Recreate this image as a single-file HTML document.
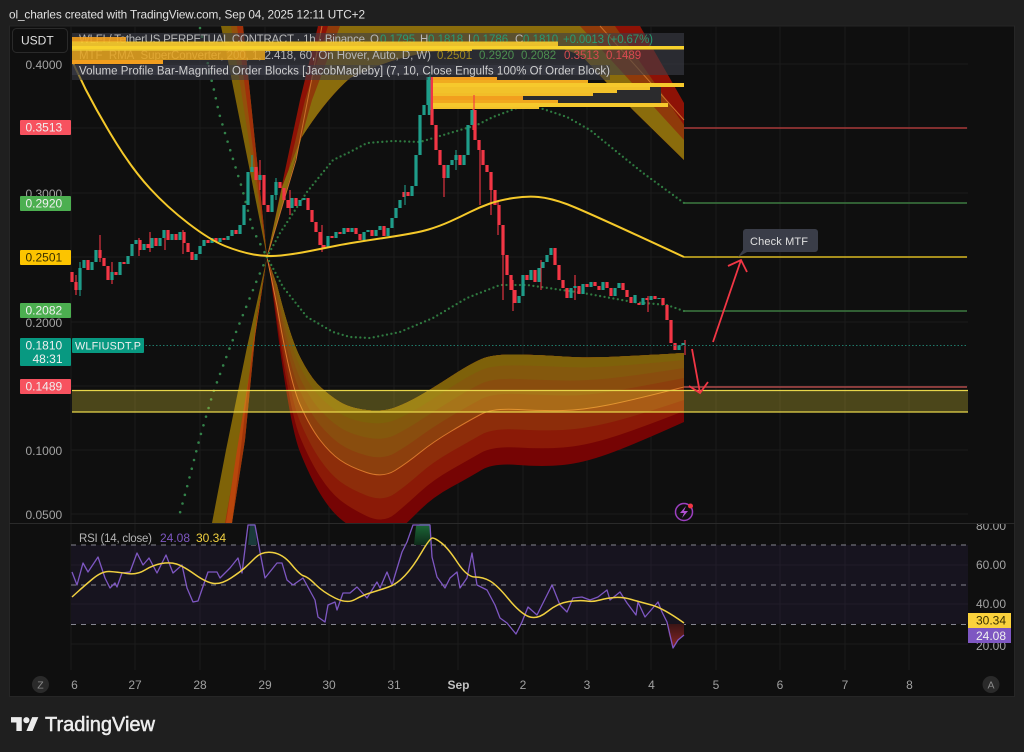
<!DOCTYPE html>
<html><head><meta charset="utf-8"><style>
html,body{margin:0;padding:0;background:#1f1f1f;width:1024px;height:752px;overflow:hidden}
svg{display:block;filter:blur(.35px)}
text{font-family:"Liberation Sans",sans-serif}
</style></head><body>
<svg width="1024" height="752" viewBox="0 0 1024 752" xmlns="http://www.w3.org/2000/svg">
<rect width="1024" height="752" fill="#1f1f1f"/>
<text x="9" y="18.500" font-size="11.800" fill="#e0e0e0" textLength="356">ol_charles created with TradingView.com, Sep 04, 2025 12:11 UTC+2</text>
<rect x="9" y="26" width="1006" height="670" fill="#0f0f0f"/>
<rect x="9.500" y="26" width="1005" height="670.500" fill="none" stroke="#262626"/>
<!-- grid -->
<g stroke="#1b1b1b" fill="none">
<path d="M71 26V696M135 26V670M200 26V670M265 26V670M329 26V670M394 26V670M458 26V670M523 26V670M587 26V670M651 26V670M716 26V670M780 26V670M845 26V670M909 26V670"/>
<path d="M71 64H968M71 128H968M71 193H968M71 257H968M71 322H968M71 386H968M71 450H968M71 514H968M71 565H968M71 604H968M71 644H968"/>
</g>
<!-- upper right fan -->
<path d="M267 257L283 180L300 100L318 26H640L684 103V160L633 110L607 83L583 57Q557 43 520 45Q470 48 430 52Q390 58 350 78Q325 100 300 140L282 187Z" fill="#8e1206"/>
<path d="M267 257L286 180L305 100L328 26H615L684 125V160L633 110L607 83L583 57Q557 43 520 45Q470 48 430 52Q390 58 350 78Q325 100 300 140L282 187Z" fill="#8f3a0a"/>
<path d="M267 257L291 175L312 100L340 26H580L684 140V160L633 110L607 83L583 57Q557 43 520 45Q470 48 430 52Q390 58 350 78Q325 100 300 140L282 187Z" fill="#8a6c0c"/>
<path d="M267 257L296 160L322 26" stroke="#c9702a" fill="none" stroke-width="1"/>
<path d="M600 26L684 120" stroke="#c9702a" fill="none" stroke-width="1"/>
<!-- upper left fan -->
<path d="M267 257L221 26H243Z" fill="#7f6308"/>
<path d="M267 257L236 26H243Z" fill="#a0300a"/>
<path d="M267 257L231 26H237Z" fill="#93500b"/>
<!-- lower left fan -->
<path d="M267 257L247 347L226 450L212 523H232L245 440L257 317Z" fill="#7f6308"/>
<path d="M267 257L250 370L238 450L225 523H232L245 440L257 317Z" fill="#a0350a"/>
<path d="M267 257L252 350L243 430L232 523H226L237 450L250 370Z" fill="#b8460c"/>
<!-- lower right lobe -->
<clipPath id="cb"><path d="M267 257L277 285Q290 337 300 357Q310 377 320 386.500Q330 396 340 402Q350 408 366.500 410Q383 412 395 407.500Q407 403 420 395.500Q433 388 451.500 376Q470 364 481.500 359Q493 354 518 354.500Q543 355 563 356.500Q583 358 608 357Q633 356 684 353V523H267Z"/></clipPath>
<g clip-path="url(#cb)">
<path d="M267 250L277 327Q290 427 300 452Q310 477 320 493.500Q330 510 340 518.500Q350 527 366.500 536Q383 545 395 534Q407 523 420 510Q433 497 451.500 487Q470 477 481.500 470Q493 463 518 465Q543 467 563 465Q583 463 608 454Q633 445 684 422V340Z" fill="#760404"/>
<path d="M267 250L277 320Q290 413 300 437Q310 461 320 476.500Q330 492 340 500Q350 508 366.500 516Q383 524 395 514Q407 504 420 492Q433 480 451.500 469.500Q470 459 481.500 452.500Q493 446 518 447.500Q543 449 563 447.500Q583 446 608 438.500Q633 431 684 411V340Z" fill="#8b1a07"/>
<path d="M267 250L277 314Q290 398 300 421.500Q310 445 320 459.500Q330 474 340 481.500Q350 489 366.500 495.500Q383 502 395 493.500Q407 485 420 473.500Q433 462 451.500 451.500Q470 441 481.500 434.500Q493 428 518 429.500Q543 431 563 430Q583 429 608 423Q633 417 684 400V340Z" fill="#8d2d0a"/>
<path d="M267 250L277 306Q290 382 300 404.500Q310 427 320 440Q330 453 340 460Q350 467 366.500 472.500Q383 478 395 470.500Q407 463 420 452.500Q433 442 451.500 431Q470 420 481.500 414Q493 408 518 409.500Q543 411 563 410.500Q583 410 608 405Q633 400 684 387V340Z" fill="#8c3f0d"/>
<path d="M267 250L277 300Q290 369 300 391Q310 413 320 425Q330 437 340 444Q350 451 366.500 455.500Q383 460 395 453Q407 446 420 436.500Q433 427 451.500 416Q470 405 481.500 399Q493 393 518 394Q543 395 563 395.500Q583 396 608 392Q633 388 684 378V340Z" fill="#894d0e"/>
<path d="M267 250L277 294Q290 357 300 378Q310 399 320 410Q330 421 340 427.500Q350 434 366.500 437.500Q383 441 395 435Q407 429 420 420.500Q433 412 451.500 400.500Q470 389 481.500 383.500Q493 378 518 379Q543 380 563 380.500Q583 381 608 378.500Q633 376 684 368V340Z" fill="#84580d"/>
<path d="M267 250L277 289Q290 346 300 366.500Q310 387 320 397Q330 407 340 413.500Q350 420 366.500 422.500Q383 425 395 420Q407 415 420 407Q433 399 451.500 387Q470 375 481.500 370Q493 365 518 365.500Q543 366 563 367Q583 368 608 366.500Q633 365 684 360V340Z" fill="#7e610a"/>
<path d="M267 257L277 306Q290 382 300 404.500Q310 427 320 440Q330 453 340 460Q350 467 366.500 472.500Q383 478 395 470.500Q407 463 420 452.500Q433 442 451.500 431Q470 420 481.500 414Q493 408 518 409.500Q543 411 563 410.500Q583 410 608 405Q633 400 684 387" stroke="#d9782c" stroke-width="1" fill="none"/>
</g>
<!-- dots -->
<g fill="none" stroke-linecap="round" stroke-width="2.300" stroke-dasharray="0 4.500">
<path d="M267 257L280 233L307 192L333 160L350 152L367 143L393 141L420 142L450 133L477 125L493 117L517 108L540 108L567 117L590 130L617 152L643 173L684 203" stroke="#2f7a40"/>
<path d="M267 257L283 287L307 317L333 332L350 337L370 338L400 332L433 318L467 298L500 285L527 285L583 293L633 302L667 305L684 311" stroke="#2f7a40"/>
<path d="M200 28L211 78L214 90L219 113L228 143L237 172L242 188L253 230L267 257" stroke="#33824a" stroke-width="2.600" stroke-dasharray="0 9"/>
<path d="M267 257L257 280L230 347L213 393L200 437L187 487L178 520" stroke="#33824a" stroke-width="2.600" stroke-dasharray="0 9"/>
</g>
<!-- candles -->
<path stroke="#f23645" stroke-width="3.200" fill="none" d="M72 272V282M76 282V290M88 260V270M100 250V258M104 258V266M108 266V280M116 272V275M124 262V264M140 240V250M148 244V248M156 238V246M168 230V240M176 234V240M184 232V243M188 243V252M192 252V260M208 240V243M216 238V242M224 238V240M236 230V234M256 167V180M264 175V205M268 205V212M280 182V188M284 188V200M288 200V208M296 198V206M308 198V210M312 210V222M316 222V232M320 232V245M324 245V248M332 236V238M340 232V234M348 228V232M356 228V234M360 234V240M372 230V236M384 226V236M404 192V197M408 192V196M432 77V125M436 125V150M440 150V165M444 165V178M460 155V165M475 110V140M479 140V150M483 150V165M487 165V172M491 172V190M495 190V205M499 205V225M503 225V255M507 255V275M511 275V290M515 290V303M527 275V280M535 270V282M555 248V265M559 265V280M563 280V288M567 288V298M579 286V294M587 284V287M595 282V286M599 286V290M607 282V288M611 288V296M623 283V290M627 290V297M631 297V303M639 303V305M647 298V300M655 296V299M663 298V305M667 305V320M671 320V343M675 343V350"/>
<path stroke="#f23645" stroke-width="1.100" fill="none" d="M76 275V295M100 235V262M112 262V284M139 238V256M150 232V252M165 230V250M183 230V254M260 160V190M290 190V215M322 225V252M444 165V197M473 95V130M480 140V205M491 172V215M498 200V235M503 225V300M513 280V311M541 260V290M575 275V300M648 296V312M685 340V355"/>
<path stroke="#1f9d8a" stroke-width="3.200" fill="none" d="M80 268V290M84 260V268M92 262V270M96 250V262M112 272V280M120 262V275M128 256V264M132 244V256M136 240V244M144 244V250M152 238V248M160 238V246M164 230V238M172 234V240M180 232V240M196 254V260M200 246V254M204 240V246M212 238V243M220 238V242M228 236V240M232 230V236M240 225V234M244 205V225M248 172V205M252 167V172M260 175V180M272 195V212M276 182V195M292 198V208M300 200V206M304 198V200M328 236V248M336 232V238M344 228V234M352 228V232M364 232V240M368 230V232M376 230V236M380 226V230M388 228V236M392 218V228M396 208V218M400 200V208M412 186V196M416 155V186M420 115V155M424 105V115M428 77V105M448 165V178M452 160V165M456 155V160M464 155V165M468 125V155M472 110V125M519 296V303M523 275V296M531 270V280M539 268V282M543 262V268M547 255V262M551 248V255M571 288V298M575 286V288M583 284V294M591 282V287M603 282V290M615 288V296M619 283V288M635 295V303M643 298V305M651 296V300M659 298V299M679 345V350M683 343V345"/>
<path stroke="#1f9d8a" stroke-width="1.100" fill="none" d="M252 155V172M80 262V296M276 178V200M456 150V170M430 72V110M405 185V205"/>
<!-- main curves -->
<path d="M73 63L86 90Q100 117 116.500 143.500Q133 170 150 188.500Q167 207 188.500 223.500Q210 240 225 246Q240 252 253.500 254.500Q267 257 281 255.500Q295 254 310 251Q325 248 337.500 245.500Q350 243 383.500 238Q417 233 428.500 229.500Q440 226 450 221.500Q460 217 470 212Q480 207 490 203.500Q500 200 513.500 198Q527 196 538.500 197Q550 198 566.500 204Q583 210 684 257" fill="none" stroke="#f5c92a" stroke-width="2"/>
<!-- level lines -->
<path d="M684 128H967" stroke="#a83a3a" stroke-width="1.500"/>
<path d="M684 203H967" stroke="#3d7a40" stroke-width="1.500"/>
<path d="M684 257H967" stroke="#d8b822" stroke-width="1.500"/>
<path d="M684 311H967" stroke="#3d7a40" stroke-width="1.500"/>
<path d="M72 345.500H967" stroke="#1f7a6a" stroke-dasharray="1.500 2"/>
<path d="M684 387H967" stroke="#b04a4a" stroke-width="1.500"/>
<!-- zone -->
<rect x="72" y="390" width="896" height="22" fill="#ffeb3b" fill-opacity="0.25"/>
<path d="M72 390.500H968M72 412H968" stroke="#e8d64a" stroke-width="1.300"/>
<!-- header panel -->
<rect x="72" y="33" width="612" height="42" fill="#3c3e48" fill-opacity="0.6"/>
<rect x="72" y="65" width="538" height="15" fill="#3c3e48" fill-opacity="0.55"/>
<rect x="431" y="87" width="230" height="20" fill="#2b2b2d"/>
<g font-size="11.500">
<text x="79" y="43" fill="#b8b8b8" textLength="286">WLFI / TetherUS PERPETUAL CONTRACT · 1h · Binance</text>
<text x="370" y="43" fill="#b8b8b8">O</text><text x="380" y="43" fill="#2a9a70">0.1795</text>
<text x="420" y="43" fill="#b8b8b8">H</text><text x="428" y="43" fill="#2a9a70">0.1818</text>
<text x="468" y="43" fill="#b8b8b8">L</text><text x="473" y="43" fill="#2a9a70">0.1786</text>
<text x="515" y="43" fill="#b8b8b8">C</text><text x="523" y="43" fill="#2a9a70">0.1810</text>
<text x="563" y="43" fill="#2a9a70" textLength="90">+0.0013 (+0.67%)</text>
<text x="79" y="59" fill="#b8b8b8" textLength="352">MTF_RMA_SuperConverter, 200, 1, 2.418, 60, On Hover, Auto, D, W)</text>
<text x="437" y="59" fill="#a08a20">0.2501</text>
<text x="479" y="59" fill="#4c8f50">0.2920</text>
<text x="521" y="59" fill="#4c8f50">0.2082</text>
<text x="564" y="59" fill="#d84a50">0.3513</text>
<text x="606" y="59" fill="#d84a50">0.1489</text>
<text x="79" y="74.500" fill="#cfcfcf" textLength="531">Volume Profile Bar-Magnified Order Blocks [JacobMagleby] (7, 10, Close Engulfs 100% Of Order Block)</text>
</g>
<!-- top volume profile -->
<g>
<rect x="72" y="37" width="54" height="5" fill="#f29e1e" fill-opacity="0.9"/>
<rect x="72" y="41.500" width="486" height="4.500" fill="#f6c92c" fill-opacity="0.93"/>
<rect x="72" y="46" width="612" height="3.500" fill="#f8d22c"/>
<rect x="72" y="49.500" width="400" height="1.500" fill="#f6c92c" fill-opacity="0.9"/>
<rect x="72" y="51" width="193" height="9" fill="#e8a51c" fill-opacity="0.85"/>
<rect x="72" y="60" width="91" height="4" fill="#f29e1e"/>
</g>
<!-- lower volume profile -->
<g>
<rect x="431" y="77" width="66" height="3" fill="#f29e1e"/>
<rect x="431" y="80" width="157" height="3" fill="#f0ab1f"/>
<rect x="431" y="83" width="253" height="4" fill="#f6c92c"/>
<rect x="431" y="87" width="219" height="3" fill="#f2c22a"/>
<rect x="431" y="90" width="186" height="3" fill="#f2c22a"/>
<rect x="431" y="93" width="162" height="3" fill="#f2bd28"/>
<rect x="431" y="96" width="92" height="4" fill="#f29e1e"/>
<rect x="431" y="100" width="127" height="3" fill="#f0a81e"/>
<rect x="431" y="103" width="237" height="4" fill="#f6c92c"/>
<rect x="431" y="107" width="108" height="2" fill="#f2c22a"/>
</g>
<path d="M429 77V115" stroke="#1f9d8a" stroke-width="2.500"/>
<path d="M432 77V125" stroke="#f23645" stroke-width="2"/>
<path d="M474 95V130" stroke="#f23645" stroke-width="1.100"/>
<!-- arrows -->
<g fill="none" stroke="#f23645" stroke-width="1.800">
<path d="M713 342L741 260M728 266L741 260L747 272"/>
<path d="M692 349L700 393M689 386L700 393L708 382"/>
</g>
<!-- callout -->
<path d="M746 229H815a3 3 0 0 1 3 3V249a3 3 0 0 1-3 3H747L738 257L743 250V232a3 3 0 0 1 3-3Z" fill="#3a3d48"/>
<text x="750" y="245" font-size="11" fill="#e0e0e0" textLength="58">Check MTF</text>
<!-- USDT box -->
<rect x="12.500" y="28.500" width="55" height="24" rx="4" fill="#0f0f0f" stroke="#2a2a2a"/>
<text x="21" y="44.500" font-size="12" fill="#e0e0e0">USDT</text>
<!-- axis labels -->
<g font-size="12" fill="#a3a3a3">
<text x="25.500" y="69">0.4000</text>
<text x="25.500" y="198">0.3000</text>
<text x="25.500" y="327">0.2000</text>
<text x="25.500" y="455">0.1000</text>
<text x="25.500" y="519">0.0500</text>
</g>
<rect x="20" y="120" width="51" height="15" rx="1" fill="#f7525f"/>
<rect x="20" y="196" width="51" height="15" rx="1" fill="#4caf50"/>
<rect x="20" y="250" width="51" height="15" rx="1" fill="#fcc400"/>
<rect x="20" y="303" width="51" height="15" rx="1" fill="#4caf50"/>
<rect x="20" y="338" width="51" height="28" rx="1" fill="#089981"/>
<rect x="20" y="379" width="51" height="15" rx="1" fill="#f7525f"/>
<rect x="72" y="338" width="72" height="15" rx="1" fill="#089981"/>
<g font-size="12" fill="#f0f0f0">
<text x="25.500" y="131.500">0.3513</text>
<text x="25.500" y="207.500">0.2920</text>
<text x="25.500" y="261.500" fill="#3a3000">0.2501</text>
<text x="25.500" y="314.500">0.2082</text>
<text x="25.500" y="349.500">0.1810</text>
<text x="32.500" y="363">48:31</text>
<text x="25.500" y="390.500">0.1489</text>
<text x="75" y="349.500" font-size="10.800" textLength="66">WLFIUSDT.P</text>
</g>
<!-- bolt -->
<circle cx="684" cy="512" r="8.500" fill="none" stroke="#9c3fc0" stroke-width="1.500"/>
<path d="M686 506L680 513H684L682 518L688 511H684Z" fill="#b050d0"/>
<circle cx="690.500" cy="506" r="2.500" fill="#f23645"/>
<!-- pane divider -->
<rect x="9" y="523" width="1006" height="1" fill="#2a2a2a"/>
<rect x="10" y="524" width="1004" height="172" fill="#0f0f0f"/>
<path d="M71 524V670M135 524V670M200 524V670M265 524V670M329 524V670M394 524V670M458 524V670M523 524V670M587 524V670M651 524V670M716 524V670M780 524V670M845 524V670M909 524V670M71 565H968M71 604H968M71 644H968" stroke="#1b1b1b"/>
<!-- RSI -->
<rect x="71" y="545" width="897" height="79" fill="#17141f"/>
<path d="M71 565H968M71 604H968M135 545V624M200 545V624M265 545V624M329 545V624M394 545V624M458 545V624M523 545V624M587 545V624M651 545V624M716 545V624M780 545V624M845 545V624M909 545V624" stroke="#201d29"/>
<path d="M71 545H968M71 585H968M71 624.500H968" stroke="#85858f" stroke-dasharray="5 5" fill="none"/>
<defs>
<linearGradient id="gg" x1="0" y1="0" x2="0" y2="1"><stop offset="0" stop-color="#1c6a38"/><stop offset="1" stop-color="#0f2a1a"/></linearGradient>
<linearGradient id="rg" x1="0" y1="0" x2="0" y2="1"><stop offset="0" stop-color="#3a1515"/><stop offset="1" stop-color="#8a2525"/></linearGradient>
</defs>
<path d="M414 545L416 526L420 524H430L431 545Z" fill="url(#gg)"/>
<path d="M248 545L250 524H255L257 545Z" fill="#1a3a3a"/>
<path d="M667 624H684V635L678 640L673 648L669 635Z" fill="url(#rg)"/>
<path fill="none" stroke="#7e57c2" stroke-width="1.300" stroke-linejoin="round" d="M72 572L77 585L83 563L88 572L98 557L105 578L110 588L115 583L117 587L122 573L130 572L137 553L143 565L149 558L157 573L166 555L173 573L182 565L187 588L193 602L198 601L208 572L217 572L220 578L230 568L238 558L242 573L248 525L255 525L260 552L265 578L277 563L282 563L287 580L293 585L303 578L315 600L318 617L325 622L328 605L335 602L337 610L343 593L350 593L357 587L367 598L377 582L380 588L387 572L392 585L402 552L407 542L413 525L430 525L432 557L437 577L445 588L450 578L457 572L460 588L467 578L472 553L477 585L487 590L495 605L500 618L507 623L516 634L522 622L528 607L537 615L547 595L552 585L560 605L567 612L573 598L582 597L590 600L598 597L607 590L610 600L620 592L627 603L636 615L638 602L645 617L658 602L662 612L667 622L673 648L678 640L684 635"/>
<path fill="none" stroke="#f0d040" stroke-width="1.500" d="M72 597L77.500 592Q83 587 92.500 579Q102 571 109.500 571.500Q117 572 127 573.500Q137 575 145 570Q153 565 161.500 563.500Q170 562 176.500 564Q183 566 195 574.500Q207 583 214.500 583.500Q222 584 231 578Q240 572 244 568.500Q248 565 255 558Q262 551 272.500 552.500Q283 554 291.500 564.500Q300 575 304 576Q308 577 315.500 584.500Q323 592 335 598Q347 604 355 599.500Q363 595 371.500 592.500Q380 590 388.500 587Q397 584 405 575.500Q413 567 421.500 552.500Q430 538 432.500 538Q435 538 441.500 543Q448 548 457.500 562.500Q467 577 475 577Q483 577 490 581Q497 585 508.500 599Q520 613 528.500 616.500Q537 620 547.500 611.500Q558 603 569 601.500Q580 600 586.500 601Q593 602 600 600Q607 598 615 597.500Q623 597 631.500 599.500Q640 602 651.500 605Q663 608 684 623"/>
<text x="79" y="542" font-size="11.500" fill="#b5b5b5" textLength="73">RSI (14, close)</text>
<text x="160" y="542" font-size="12" fill="#7e57c2">24.08</text>
<text x="196" y="542" font-size="12" fill="#f0d040">30.34</text>
<!-- right axis -->
<g font-size="12" fill="#a3a3a3">
<clipPath id="ra"><rect x="970" y="524" width="44" height="130"/></clipPath>
<g clip-path="url(#ra)">
<text x="976" y="530">80.00</text>
<text x="976" y="569">60.00</text>
<text x="976" y="608">40.00</text>
<text x="976" y="650">20.00</text>
</g>
</g>
<rect x="968" y="613" width="43" height="15" fill="#fbd23c"/>
<rect x="968" y="628" width="43" height="15" fill="#7e57c2"/>
<text x="976" y="624.500" font-size="12" fill="#3a3000">30.34</text>
<text x="976" y="640" font-size="12" fill="#f0f0f0">24.08</text>
<!-- time axis -->
<g font-size="12" fill="#a0a0a0" text-anchor="middle">
<text x="74.500" y="689">6</text>
<text x="135" y="689">27</text>
<text x="200" y="689">28</text>
<text x="265" y="689">29</text>
<text x="329" y="689">30</text>
<text x="394" y="689">31</text>
<text x="458.500" y="689" font-weight="bold" fill="#c0c0c0">Sep</text>
<text x="523" y="689">2</text>
<text x="587" y="689">3</text>
<text x="651.500" y="689">4</text>
<text x="716" y="689">5</text>
<text x="780" y="689">6</text>
<text x="845" y="689">7</text>
<text x="909.500" y="689">8</text>
</g>
<circle cx="40.500" cy="684.500" r="8.500" fill="#2a2a2a"/>
<text x="40.500" y="688.500" font-size="10.500" fill="#8a8a8a" text-anchor="middle">Z</text>
<circle cx="991" cy="684.500" r="8.500" fill="#2a2a2a"/>
<text x="991" y="688.500" font-size="10.500" fill="#8a8a8a" text-anchor="middle">A</text>
<!-- logo -->
<g transform="translate(11,714) scale(0.77)" fill="#ececec">
<path d="M14 22H7V11H0V4h14v18zM28 22h-8l7.500-18h8L28 22z"/>
<circle cx="20" cy="8" r="4"/>
</g>
<text x="45" y="731" font-size="20" fill="#ececec" stroke="#ececec" stroke-width="0.500" textLength="110">TradingView</text>
</svg>
</body></html>
